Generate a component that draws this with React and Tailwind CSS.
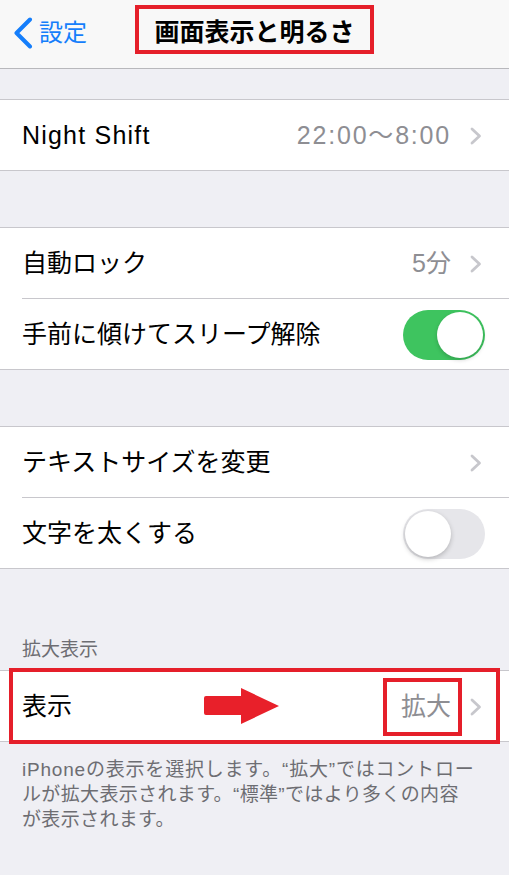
import React from "react";

const font = { fontFamily: "'Liberation Sans','Noto Sans CJK JP',sans-serif" };

function Chevron() {
  return (
    <svg width="12" height="18" viewBox="0 0 12 18" className="shrink-0">
      <path d="M2 2 L9.5 9 L2 16" fill="none" stroke="#c7c7cc" strokeWidth="2.8" strokeLinecap="round" strokeLinejoin="round" />
    </svg>
  );
}

function Toggle({ on }) {
  if (on) {
    return (
      <div className="w-[82px] h-[50px] rounded-full bg-[#3ec45f] flex items-center justify-end p-[2px] shrink-0">
        <div className="w-[46px] h-[46px] rounded-full bg-white shadow-[0_2px_4px_rgba(0,0,0,0.18)]" />
      </div>
    );
  }
  return (
    <div className="w-[82px] h-[50px] rounded-full bg-[#e6e6ea] flex items-center justify-start p-[2px] shrink-0">
      <div className="w-[46px] h-[46px] rounded-full bg-white shadow-[0_2px_5px_rgba(0,0,0,0.22)]" />
    </div>
  );
}

function Row({ label, value, chevron, toggle, separator }) {
  return (
    <div className="bg-white">
      <div className="h-[70px] flex items-center pl-[22px] pr-[24px] pt-[2px]">
        <span className="text-[25px] text-black flex-1 whitespace-nowrap">{label}</span>
        {value && <span className="text-[25px] text-[#8e8e93] whitespace-nowrap">{value}</span>}
        {chevron && <span className="ml-[19px] mr-[3px] flex items-center"><Chevron /></span>}
        {toggle !== undefined && <Toggle on={toggle} />}
      </div>
      {separator && <div className="ml-[22px] h-px bg-[#c8c7cc]" />}
    </div>
  );
}

function Section({ children }) {
  return <div className="border-y border-[#c8c7cc] bg-white">{children}</div>;
}

export default function App() {
  return (
    <div className="w-[509px] h-[875px] bg-[#efeff4] overflow-hidden" style={font}>
      {/* navigation bar */}
      <div className="h-[69px] bg-[#f8f8f8] border-b border-[#b8b8bc] grid grid-cols-[1fr_auto_1fr] items-start">
        <div className="flex items-center pl-[12px] pt-[17px]">
          <svg width="22" height="32" viewBox="0 0 22 32">
            <path d="M18 2.5 L4.5 16 L18 29.5" fill="none" stroke="#157efb" strokeWidth="4" strokeLinecap="round" strokeLinejoin="round" />
          </svg>
          <span className="ml-[5px] text-[24px] text-[#157efb] leading-none">設定</span>
        </div>
        <div className="mt-[5px] border-[4px] border-[#e51f2a] px-[15px] pt-[6px] h-[49px] flex items-center">
          <span className="text-[25px] font-bold text-black whitespace-nowrap leading-none">画面表示と明るさ</span>
        </div>
        <div />
      </div>

      <div className="h-[30px]" />
      <Section>
        <Row
          label={<span className="tracking-[1.2px]">Night Shift</span>}
          value={<span className="tracking-[1.8px]">22:00〜8:00</span>}
          chevron
        />
      </Section>

      <div className="h-[56px]" />
      <Section>
        <Row label="自動ロック" value="5分" chevron separator />
        <Row label="手前に傾けてスリープ解除" toggle={true} />
      </Section>

      <div className="h-[56px]" />
      <Section>
        <Row label="テキストサイズを変更" chevron separator />
        <Row label="文字を太くする" toggle={false} />
      </Section>

      <div className="h-[101px] flex items-end pl-[22px] pb-[11px]">
        <span className="text-[19px] text-[#6d6d72] leading-none">拡大表示</span>
      </div>

      <div className="relative">
        <Section>
          <div className="h-[70px] flex items-center pl-[22px] pr-[24px] pt-[2px]">
            <span className="text-[25px] text-black flex-1">表示</span>
            <span className="relative text-[25px] text-[#8e8e93]">
              拡大
              <span className="absolute -left-[18px] -right-[11px] -top-[10px] -bottom-[10px] border-[4px] border-[#e51f2a]" />
            </span>
            <span className="ml-[19px] mr-[3px] flex items-center"><Chevron /></span>
          </div>
        </Section>
        {/* annotation: highlight frame and pointer arrow */}
        <div className="absolute left-[9px] right-[9px] -top-[2px] -bottom-[2px] border-[4px] border-[#e51f2a]" />
        <svg className="absolute left-[203px] top-[17px]" width="78" height="38" viewBox="0 0 78 38">
          <path d="M3 9 H38 V1 L76 19 L38 37 V28 H3 Q1 28 1 26 V11 Q1 9 3 9 Z" fill="#e8202a" />
        </svg>
      </div>

      <div className="pl-[22px] pr-[10px] pt-[15px] text-[19px] leading-[25px] text-[#6d6d72]">
        <div className="whitespace-nowrap tracking-[0.8px]">iPhoneの表示を選択します。“拡大”ではコントロー</div>
        <div className="whitespace-nowrap tracking-[0.35px]">ルが拡大表示されます。“標準”ではより多くの内容</div>
        <div className="whitespace-nowrap tracking-[0.35px]">が表示されます。</div>
      </div>
    </div>
  );
}
